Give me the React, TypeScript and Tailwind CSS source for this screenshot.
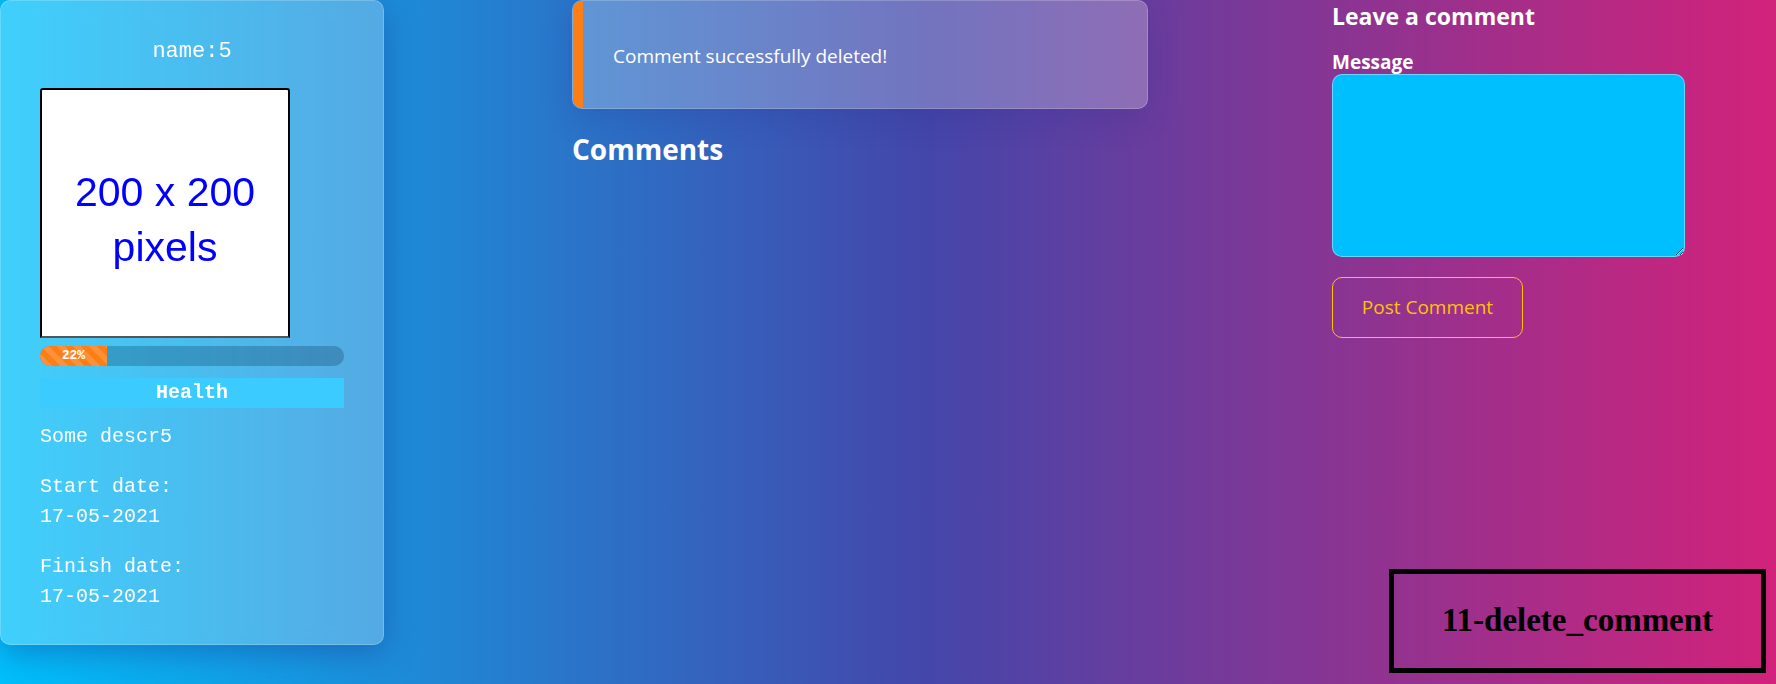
import React from "react";

const mono = { fontFamily: '"Liberation Mono", "DejaVu Sans Mono", monospace' };
const sans = { fontFamily: '"Open Sans", "Noto Sans", sans-serif' };

function Card() {
  return (
    <div
      className="w-[384px] h-[645px] shrink-0 rounded-[10px] border border-white/20 bg-white/25 backdrop-blur-sm shadow-[0_8px_32px_0_rgba(31,38,135,0.37)] px-[39px] pt-[34px] text-white"
      style={mono}
    >
      <div className="text-center text-[22px] leading-[33px]">name:5</div>
      <div
        className="mt-[20px] w-[250px] h-[250px] bg-white border-2 border-black border-b-[#555] rounded-t-[3px] flex flex-col items-center justify-center pt-[14px] text-[#0000ff] text-[41px] leading-[55px]"
        style={{ fontFamily: '"Liberation Sans", Arial, sans-serif' }}
      >
        <span>200 x 200</span>
        <span>pixels</span>
      </div>
      <div className="mt-[8px] h-[20px] w-full rounded-full bg-[#002441]/25 overflow-hidden flex">
        <div
          className="h-full flex items-center justify-center text-[13px] font-bold text-white bg-[#fd7e14]"
          style={{
            ...mono,
            width: "22%",
            backgroundImage:
              "linear-gradient(45deg, rgba(255,255,255,.15) 25%, transparent 25%, transparent 50%, rgba(255,255,255,.15) 50%, rgba(255,255,255,.15) 75%, transparent 75%, transparent)",
            backgroundSize: "16px 16px",
          }}
        >
          22%
        </div>
      </div>
      <div className="mt-[12px] h-[30px] bg-[#3ccbfe] flex items-center justify-center font-bold text-[20px]">Health</div>
      <div className="mt-[14px] text-[20px] leading-[30px]">
        <p className="mb-[20px]">Some descr5</p>
        <p className="mb-[20px]">
          Start date:
          <br />
          17-05-2021
        </p>
        <p className="mb-[20px]">
          Finish date:
          <br />
          17-05-2021
        </p>
      </div>
    </div>
  );
}

function Middle() {
  return (
    <div className="ml-[188px] w-[576px] shrink-0" style={sans}>
      <div className="h-[109px] rounded-[10px] border border-white/20 bg-white/25 shadow-[0_8px_32px_0_rgba(31,38,135,0.2)] flex overflow-hidden">
        <div className="w-[10px] bg-[#fd7e14] shrink-0 -my-px" />
        <div className="flex items-center pl-[30px] pt-[3px] text-white text-[19px]">Comment successfully deleted!</div>
      </div>
      <h2 className="mt-[20px] text-white font-bold text-[28px] leading-[40px]">Comments</h2>
    </div>
  );
}

function Right() {
  return (
    <div className="ml-[184px] w-[353px] shrink-0 text-white" style={sans}>
      <h3 className="font-bold text-[23px] leading-[32px]">Leave a comment</h3>
      <label className="block font-bold text-[19px] leading-[24px] mt-[18px]">Message</label>
      <textarea className="block w-[353px] h-[183px] bg-[#00bfff] border border-white/40 rounded-[10px] outline-none" />
      <button className="mt-[20px] w-[191px] h-[61px] border border-[#ffc107] rounded-[10px] text-[#ffc107] text-[19px] bg-transparent">
        Post Comment
      </button>
    </div>
  );
}

export default function App() {
  return (
    <div className="relative w-full h-[684px] overflow-hidden bg-[linear-gradient(to_right,#00c0fb_0%,#4446aa_52%,#d2227a_100%)]">
      <div className="flex items-start">
        <Card />
        <Middle />
        <Right />
      </div>
      <div
        className="absolute right-[10px] bottom-[11px] w-[377px] h-[104px] border-[5px] border-black flex items-center justify-center text-black font-bold text-[33px]"
        style={{ fontFamily: '"Liberation Serif", "Times New Roman", serif' }}
      >
        11-delete_comment
      </div>
    </div>
  );
}
